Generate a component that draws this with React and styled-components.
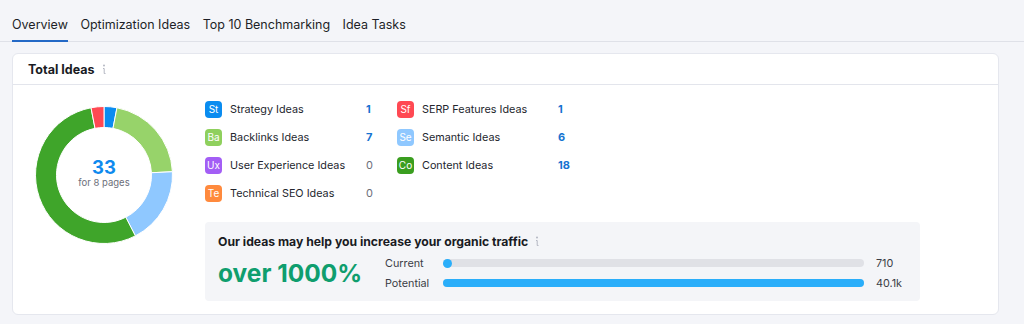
import React from 'react';
import styled, { createGlobalStyle } from 'styled-components';

const GlobalStyle = createGlobalStyle`
  body {
    margin: 0;
    background: #f4f5f9;
    font-family: Inter, 'Noto Sans', sans-serif;
    color: #191b23;
  }
`;

const Page = styled.div`
  width: 1024px;
  height: 324px;
  overflow: hidden;
`;

const Tabs = styled.nav`
  display: flex;
  gap: 12.5px;
  height: 41px;
  padding-left: 12px;
  border-bottom: 1px solid #dfe1e8;
`;

const Tab = styled.div`
  display: flex;
  align-items: center;
  font-size: 12.5px;
  color: #1d1f27;
  border-bottom: 2px solid ${p => (p.$active ? '#2469c6' : 'transparent')};
  padding-top: 9px;
  margin-bottom: -1px;
`;

const Card = styled.section`
  margin: 11px 25px 0 12px;
  height: 262px;
  background: #fff;
  border: 1px solid #e5e7ee;
  border-radius: 6px;
  box-sizing: border-box;
`;

const CardHeader = styled.header`
  display: flex;
  align-items: center;
  gap: 6px;
  height: 30px;
  padding-left: 15px;
  border-bottom: 1px solid #e3e5ec;
  font-size: 12.5px;
  font-weight: 700;
`;

const CardBody = styled.div`
  display: flex;
  padding: 10px 0 0 22px;
`;

const DonutWrap = styled.div`
  position: relative;
  width: 138px;
  height: 138px;
  margin-top: 11px;
  margin-right: 32px;
`;

const DonutCenter = styled.div`
  position: absolute;
  inset: 0;
  display: flex;
  flex-direction: column;
  align-items: center;
  justify-content: center;
  padding-bottom: 4px;
`;

const BigNumber = styled.div`
  font-size: 18.5px;
  font-weight: 700;
  color: #0f8aee;
  line-height: 20px;
`;

const SubText = styled.div`
  font-size: 9.5px;
  color: #6c6e79;
  line-height: 12px;
`;

const Main = styled.div`
  display: flex;
  flex-direction: column;
`;

const Legend = styled.div`
  display: flex;
  gap: 5px;
`;

const LegendCol = styled.div`
  display: grid;
  grid-template-columns: 17px 128px 26px;
  grid-auto-rows: 28px;
  column-gap: 8px;
  align-items: center;
`;

const Badge = styled.span`
  width: 17px;
  height: 17px;
  border-radius: 4px;
  background: ${p => p.$color};
  color: #fff;
  font-size: 10px;
  display: flex;
  align-items: center;
  justify-content: center;
`;

const Label = styled.span`
  font-size: 10.8px;
  color: #24262e;
  white-space: nowrap;
`;

const Count = styled.span`
  font-size: 11px;
  font-weight: ${p => (p.$zero ? 400 : 700)};
  color: ${p => (p.$zero ? '#6c6e79' : '#1673d1')};
`;

const Traffic = styled.div`
  margin-top: 15px;
  width: 715px;
  height: 79px;
  box-sizing: border-box;
  background: #f4f5f8;
  border-radius: 4px;
  padding: 12px 12px 0 13px;
`;

const TrafficTitle = styled.div`
  display: flex;
  align-items: center;
  gap: 6px;
  font-size: 12.2px;
  font-weight: 700;
  color: #191b23;
`;

const TrafficRow = styled.div`
  display: flex;
  align-items: center;
  margin-top: 4px;
`;

const Percent = styled.div`
  flex-shrink: 0;
  width: 167px;
  font-size: 24.5px;
  font-weight: 700;
  color: #0f9e6e;
`;

const Bars = styled.div`
  display: grid;
  grid-template-columns: 46px 421px auto;
  grid-auto-rows: 20px;
  column-gap: 12px;
  align-items: center;
`;

const BarLabel = styled.span`
  font-size: 10.8px;
  color: #3b3d46;
`;

const Track = styled.div`
  display: flex;
  align-items: center;
  height: 8px;
  border-radius: 4px;
  background: #e0e1e6;
`;

const Fill = styled.div`
  height: ${p => (p.$dot ? '9px' : '100%')};
  border-radius: 5px;
  background: #2aaefa;
  min-width: 9px;
`;

const BarValue = styled.span`
  font-size: 10.8px;
  color: #3b3d46;
`;

const InfoIcon = () => (
  <svg width="6" height="11" viewBox="0 0 6 11">
    <circle cx="3" cy="1.5" r="1" fill="#b4b7c2" />
    <path d="M2 4.5h1.2v5H4.5" stroke="#b4b7c2" strokeWidth="1" fill="none" />
  </svg>
);

const segments = [
  { value: 1, color: '#0a8cf0' },
  { value: 7, color: '#97d36a' },
  { value: 6, color: '#8fc8ff' },
  { value: 18, color: '#3fa52a' },
  { value: 1, color: '#ff4953' },
];

const polar = (cx, cy, r, a) => {
  const rad = ((a - 90) * Math.PI) / 180;
  return [cx + r * Math.cos(rad), cy + r * Math.sin(rad)];
};

const arcPath = (a0, a1, ro, ri) => {
  const c = 69;
  const [x0, y0] = polar(c, c, ro, a0);
  const [x1, y1] = polar(c, c, ro, a1);
  const [x2, y2] = polar(c, c, ri, a1);
  const [x3, y3] = polar(c, c, ri, a0);
  const large = a1 - a0 > 180 ? 1 : 0;
  return `M${x0} ${y0}A${ro} ${ro} 0 ${large} 1 ${x1} ${y1}L${x2} ${y2}A${ri} ${ri} 0 ${large} 0 ${x3} ${y3}Z`;
};

const Donut = () => {
  const total = segments.reduce((s, x) => s + x.value, 0);
  let start = 0;
  return (
    <svg width="138" height="138" viewBox="0 0 138 138">
      {segments.map((s, i) => {
        const end = start + (s.value / total) * 360;
        const d = arcPath(start, end, 68.5, 47.5);
        start = end;
        return <path key={i} d={d} fill={s.color} stroke="#fff" strokeWidth="1" />;
      })}
    </svg>
  );
};

const leftItems = [
  { code: 'St', label: 'Strategy Ideas', count: 1, color: '#0a8cf0' },
  { code: 'Ba', label: 'Backlinks Ideas', count: 7, color: '#8fd05d' },
  { code: 'Ux', label: 'User Experience Ideas', count: 0, color: '#a35ef5' },
  { code: 'Te', label: 'Technical SEO Ideas', count: 0, color: '#ff8a3d' },
];

const rightItems = [
  { code: 'Sf', label: 'SERP Features Ideas', count: 1, color: '#ff4953' },
  { code: 'Se', label: 'Semantic Ideas', count: 6, color: '#8fc8ff' },
  { code: 'Co', label: 'Content Ideas', count: 18, color: '#3a9e1f' },
];

const LegendColumn = ({ items }) => (
  <LegendCol>
    {items.map(it => (
      <React.Fragment key={it.code}>
        <Badge $color={it.color}>{it.code}</Badge>
        <Label>{it.label}</Label>
        <Count $zero={it.count === 0}>{it.count}</Count>
      </React.Fragment>
    ))}
  </LegendCol>
);

export default function App() {
  return (
    <Page>
      <GlobalStyle />
      <Tabs>
        <Tab $active>Overview</Tab>
        <Tab>Optimization Ideas</Tab>
        <Tab>Top 10 Benchmarking</Tab>
        <Tab>Idea Tasks</Tab>
      </Tabs>
      <Card>
        <CardHeader>
          Total Ideas <InfoIcon />
        </CardHeader>
        <CardBody>
          <DonutWrap>
            <Donut />
            <DonutCenter>
              <BigNumber>33</BigNumber>
              <SubText>for 8 pages</SubText>
            </DonutCenter>
          </DonutWrap>
          <Main>
            <Legend>
              <LegendColumn items={leftItems} />
              <LegendColumn items={rightItems} />
            </Legend>
            <Traffic>
              <TrafficTitle>
                Our ideas may help you increase your organic traffic <InfoIcon />
              </TrafficTitle>
              <TrafficRow>
                <Percent>over 1000%</Percent>
                <Bars>
                  <BarLabel>Current</BarLabel>
                  <Track>
                    <Fill $dot style={{ width: `${(710 / 40100) * 100}%` }} />
                  </Track>
                  <BarValue>710</BarValue>
                  <BarLabel>Potential</BarLabel>
                  <Track>
                    <Fill style={{ width: '100%' }} />
                  </Track>
                  <BarValue>40.1k</BarValue>
                </Bars>
              </TrafficRow>
            </Traffic>
          </Main>
        </CardBody>
      </Card>
    </Page>
  );
}
